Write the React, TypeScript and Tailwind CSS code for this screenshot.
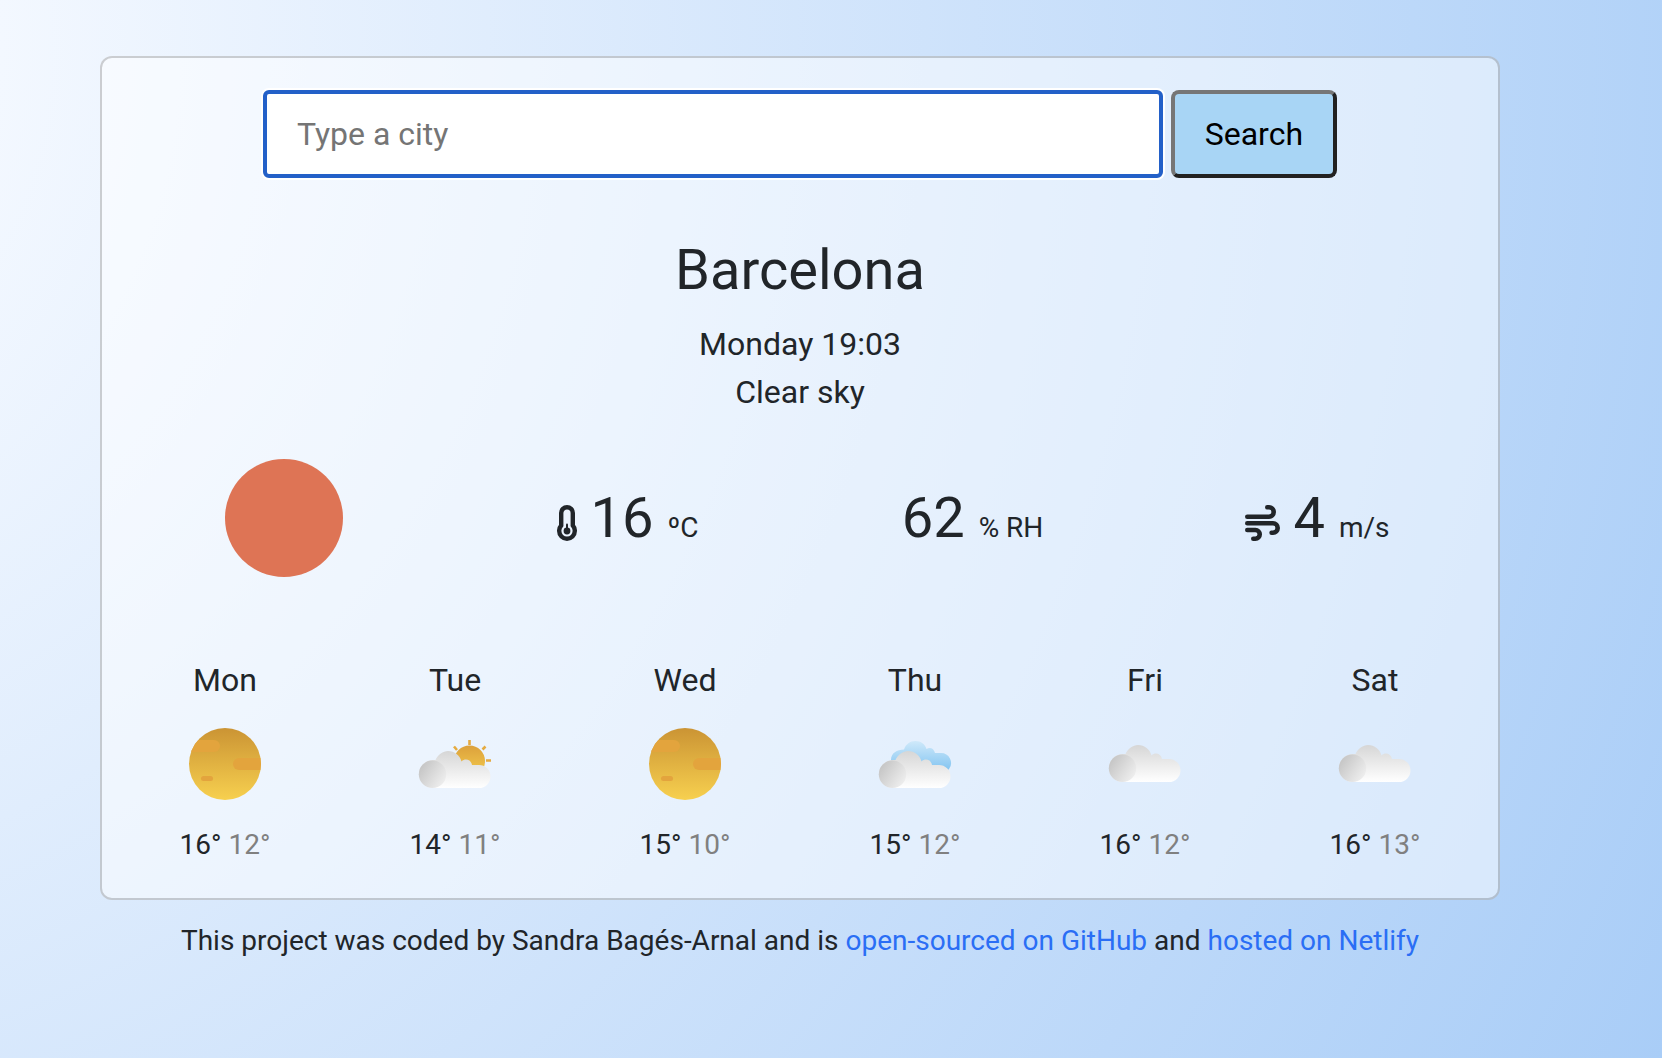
import React from "react";

type Sky = "clear" | "few" | "broken" | "scattered";

const days: { name: string; sky: Sky; max: number; min: number }[] = [
  { name: "Mon", sky: "clear", max: 16, min: 12 },
  { name: "Tue", sky: "few", max: 14, min: 11 },
  { name: "Wed", sky: "clear", max: 15, min: 10 },
  { name: "Thu", sky: "broken", max: 15, min: 12 },
  { name: "Fri", sky: "scattered", max: 16, min: 12 },
  { name: "Sat", sky: "scattered", max: 16, min: 13 },
];

function Gradients() {
  return (
    <svg className="absolute h-0 w-0" aria-hidden="true">
      <defs>
        <linearGradient id="disc" x1="0" y1="0" x2="0" y2="1">
          <stop offset="0" stopColor="#cb9434" />
          <stop offset="1" stopColor="#f7d04f" />
        </linearGradient>
        <linearGradient id="sun" x1="0" y1="0" x2="0" y2="1">
          <stop offset="0" stopColor="#dca13c" />
          <stop offset="1" stopColor="#f4cc4d" />
        </linearGradient>
        <linearGradient id="cloud" x1="0" y1="0" x2="0" y2="1">
          <stop offset="0" stopColor="#d6d6d6" />
          <stop offset="1" stopColor="#ffffff" />
        </linearGradient>
        <linearGradient id="puff" x1="0.1" y1="0.2" x2="0.9" y2="0.75">
          <stop offset="0" stopColor="#c6c6c6" />
          <stop offset="1" stopColor="#ececec" />
        </linearGradient>
        <linearGradient id="blue" x1="0" y1="0" x2="0" y2="1">
          <stop offset="0" stopColor="#cfe9fa" />
          <stop offset="1" stopColor="#7cc1f0" />
        </linearGradient>
        <clipPath id="discClip">
          <circle cx="50" cy="50" r="36" />
        </clipPath>
      </defs>
    </svg>
  );
}

function Cloud({ y }: { y: number }) {
  return (
    <g transform={`translate(0 ${y})`}>
      <path
        fill="url(#cloud)"
        d="M28 37A14 14 0 0 1 14 23A14 14 0 0 1 28 9H30.500C33 3.500 38 0 43 0C49.500 0 55 4.500 56.500 10.500C60 7 66 8.500 67 14H74A11.500 11.500 0 0 1 74 37Z"
      />
      <circle cx="27.500" cy="23.300" r="13.700" fill="url(#puff)" />
    </g>
  );
}

function SkyIcon({ sky }: { sky: Sky }) {
  return (
    <svg viewBox="0 0 100 100" className="size-[100px]" role="img" aria-label={sky}>
      {sky === "clear" && (
        <>
          <circle cx="50" cy="50" r="36" fill="url(#disc)" />
          <g clipPath="url(#discClip)" fill="#e3a43d">
            <rect x="2" y="26" width="43" height="12" rx="6" />
            <rect x="58" y="44" width="44" height="12" rx="6" />
            <rect x="26" y="62" width="12" height="5" rx="2.500" />
          </g>
        </>
      )}
      {sky === "few" && (
        <>
          <circle cx="64.500" cy="47" r="15.500" fill="url(#sun)" />
          <g stroke="#e5ab41" strokeWidth="2.600">
            <path d="M64.500 26V31M49 32.500L52 36M80.500 32.500L77.500 35.500M81 46.500H86" />
          </g>
          <Cloud y={37} />
        </>
      )}
      {sky === "broken" && (
        <>
          <path
            fill="url(#blue)"
            d="M36 57A10 10 0 0 1 26 46C26 39 32 35.500 39 35.500C41 30 45 27 50.500 27C56 27 60 30 61.500 35C65 32.500 69 34.500 70 39H76A10 10 0 0 1 84 55L80 59Z"
          />
          <Cloud y={37} />
        </>
      )}
      {sky === "scattered" && <Cloud y={31} />}
    </svg>
  );
}

function ThermometerIcon() {
  return (
    <svg
      viewBox="0 0 20 36"
      className="mr-3.5 inline-block h-9 w-5 align-[-4px]"
      fill="none"
      stroke="#212529"
      aria-hidden="true"
    >
      <path
        strokeWidth="4.400"
        d="M4.200 8A5.800 5.800 0 0 1 15.800 8V20.500A7.800 7.800 0 0 1 17.800 26A7.800 7.800 0 0 1 2.200 26A7.800 7.800 0 0 1 4.200 20.500Z"
      />
      <path strokeWidth="2" strokeLinecap="round" d="M10 19.500V26" />
      <circle cx="10" cy="26" r="3.400" fill="#212529" stroke="none" />
    </svg>
  );
}

function WindIcon() {
  return (
    <svg
      viewBox="0 0 36 36"
      className="mr-3 inline-block size-9 align-[-4px]"
      fill="none"
      stroke="#212529"
      strokeWidth="4.600"
      strokeLinecap="round"
      aria-hidden="true"
    >
      <path d="M2.300 11.700H24A4.700 4.700 0 0 0 24 2.300H22.300" />
      <path d="M2.300 18.300H28A4.700 4.700 0 0 1 28 27.700H26.600" />
      <path d="M2.300 25H10.400A4.350 4.350 0 0 1 10.400 33.700H8.300" />
    </svg>
  );
}

export default function App() {
  return (
    <div className="min-h-screen bg-[radial-gradient(circle_at_-365px_48px,#f3f8ff_365px,#a9cdf7_2265px)] px-[100px] pt-14 pb-8 font-[Roboto,sans-serif] text-[28px] leading-[42px] text-[#212529]">
      <Gradients />
      <main className="mr-[62px] rounded-xl border-2 border-black/18 bg-white/50 px-2 py-8">
        <form className="mx-[153px] flex gap-2" onSubmit={(e) => e.preventDefault()}>
          <input
            type="search"
            aria-label="City"
            placeholder="Type a city"
            className="h-[88px] min-w-0 flex-1 rounded-md border-4 border-[#2360c8] bg-white px-[30px] text-[32px] shadow-[0_0_0_2px_#ffffff] outline-none placeholder:text-[#757575]"
          />
          <button
            type="submit"
            className="h-[88px] rounded-lg border-4 border-t-[#767676] border-r-[#212121] border-b-[#212121] border-l-[#767676] bg-[#a8d5f5] px-[30px] text-[32px] text-black"
          >
            Search
          </button>
        </form>

        <header className="mt-[58px] text-center text-[32px] leading-[48px]">
          <h1 className="mb-4 text-[56px] leading-[68px]">Barcelona</h1>
          <p>Monday 19:03</p>
          <p>Clear sky</p>
        </header>

        <section className="mt-0.5 grid grid-cols-4 items-center text-center whitespace-nowrap">
          <div className="flex justify-center">
            <svg viewBox="0 0 200 200" className="size-[200px]" role="img" aria-label="Clear sky">
              <circle cx="101" cy="100" r="59" fill="#de7455" />
            </svg>
          </div>
          <p className="pt-2.5">
            <ThermometerIcon />
            <strong className="mr-3.5 text-[56px] font-normal">16</strong>
            <span>ºC</span>
          </p>
          <p className="pt-2.5">
            <strong className="mr-3.5 text-[56px] font-normal">62</strong>
            <span>% RH</span>
          </p>
          <p className="pt-2.5">
            <WindIcon />
            <strong className="mr-3.5 text-[56px] font-normal">4</strong>
            <span>m/s</span>
          </p>
        </section>

        <section className="mt-[38px] flex justify-between px-10 text-center">
          {days.map((day) => (
            <div key={day.name} className="flex w-[150px] flex-col items-center">
              <h2 className="text-[32px] leading-[48px]">{day.name}</h2>
              <div className="my-2.5">
                <SkyIcon sky={day.sky} />
              </div>
              <p>
                {day.max}° <span className="text-[#808080]">{day.min}°</span>
              </p>
            </div>
          ))}
        </section>
      </main>
      <footer className="mt-5 mr-[62px] text-center">
        This project was coded by Sandra Bagés-Arnal and is{" "}
        <a href="#github" className="text-[#2a6ef5]">
          open-sourced on GitHub
        </a>{" "}
        and{" "}
        <a href="#netlify" className="text-[#2a6ef5]">
          hosted on Netlify
        </a>
      </footer>
    </div>
  );
}
